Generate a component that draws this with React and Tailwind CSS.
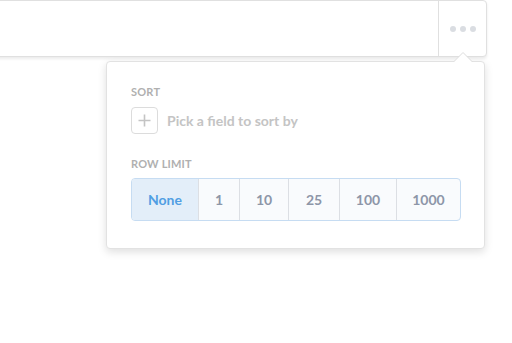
import React from "react";

const limits = [
  { label: "None", w: "w-[66px]", active: true },
  { label: "1", w: "w-[41px]" },
  { label: "10", w: "w-[49px]" },
  { label: "25", w: "w-[51px]" },
  { label: "100", w: "w-[57px]" },
  { label: "1000", w: "flex-1" },
];

export default function App() {
  return (
    <div className="relative h-[343px] w-[512px] overflow-hidden bg-white font-['Lato','Noto_Sans',sans-serif]">
      {/* top bar */}
      <div className="ml-[-8px] flex h-[57px] w-[495px] rounded-br-[4px] rounded-tr-[4px] border border-[#e0e0e0] bg-white shadow-[0_2px_3px_rgba(0,0,0,0.08)]">
        <div className="flex-1" />
        <div className="flex w-[48px] items-center justify-center gap-[4px] border-l border-[#e0e0e0]">
          <span className="h-[6px] w-[6px] rounded-full bg-[#dadde2]" />
          <span className="h-[6px] w-[6px] rounded-full bg-[#dadde2]" />
          <span className="h-[6px] w-[6px] rounded-full bg-[#dadde2]" />
        </div>
      </div>

      {/* popover */}
      <div className="absolute left-[106px] top-[61px] w-[379px] rounded-[4px] border border-[#e2e2e2] bg-white pb-[27px] pl-[24px] pr-[23px] pt-[23px] shadow-[0_3px_8px_rgba(0,0,0,0.13)]">
        {/* arrow */}
        <svg className="absolute right-[11px] top-[-11px]" width="20" height="12" viewBox="0 0 20 12">
          <path d="M0 11.5 L10 1.5 L20 11.5" fill="white" stroke="#dcdcdc" strokeWidth="1" />
          <rect x="0" y="11" width="20" height="2" fill="white" />
        </svg>

        <div className="text-[11px] font-bold leading-[13px] tracking-[0.2px] text-[#b0b0b0]">SORT</div>
        <div className="mt-[9px] flex items-center gap-[9px]">
          <div className="flex h-[27px] w-[27px] items-center justify-center rounded-[4px] border border-[#dcdcdc]">
            <svg width="13" height="13" viewBox="0 0 13 13">
              <path d="M6.5 0.5 V12.5 M0.5 6.5 H12.5" stroke="#c4c4c4" strokeWidth="1.6" />
            </svg>
          </div>
          <span className="text-[14px] font-bold text-[#c4c4c4]">Pick a field to sort by</span>
        </div>

        <div className="mt-[23px] text-[11px] font-bold leading-[13px] tracking-[0.2px] text-[#b0b0b0]">ROW LIMIT</div>
        <div className="mt-[8px] flex h-[43px] overflow-hidden rounded-[4px] border border-[#c6dcf2] bg-[#f9fbfd]">
          {limits.map((l, i) => (
            <div
              key={l.label}
              className={`${l.w} flex items-center justify-center text-[14px] font-bold ${
                i > 0 ? "border-l border-[#dcdfe4]" : ""
              } ${l.active ? "bg-[#e3eef9] text-[#509ee3]" : "text-[#8d96a8]"}`}
            >
              {l.label}
            </div>
          ))}
        </div>
      </div>
    </div>
  );
}
